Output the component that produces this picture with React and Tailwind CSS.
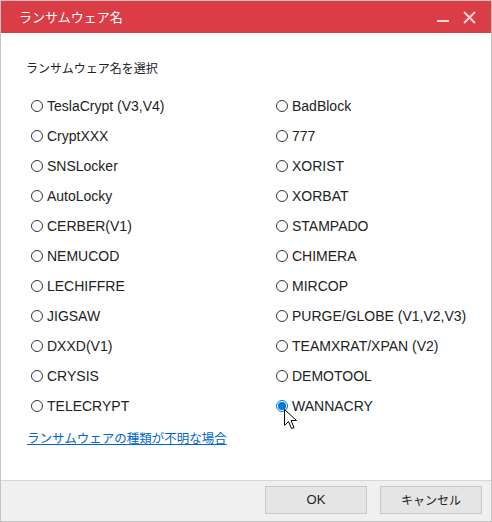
import { useState } from "react";

//ransomware names, two columns
const leftNames = [
  "TeslaCrypt (V3,V4)",
  "CryptXXX",
  "SNSLocker",
  "AutoLocky",
  "CERBER(V1)",
  "NEMUCOD",
  "LECHIFFRE",
  "JIGSAW",
  "DXXD(V1)",
  "CRYSIS",
  "TELECRYPT",
];
const rightNames = [
  "BadBlock",
  "777",
  "XORIST",
  "XORBAT",
  "STAMPADO",
  "CHIMERA",
  "MIRCOP",
  "PURGE/GLOBE (V1,V2,V3)",
  "TEAMXRAT/XPAN (V2)",
  "DEMOTOOL",
  "WANNACRY",
];

const font = { fontFamily: '"Liberation Sans", "Noto Sans CJK JP", sans-serif' };
const jp = { fontFamily: '"Noto Sans CJK JP", sans-serif' };

function Radio({ label, checked, onSelect }) {
  return (
    <button
      onClick={onSelect}
      className="flex items-center h-[30px] gap-[4px] text-[14px] text-[#222] text-left"
    >
      {checked ? (
        <span className="w-[12px] h-[12px] rounded-full border border-[#0078d7] flex items-center justify-center">
          <span className="w-[8px] h-[8px] rounded-full bg-[#0078d7]" />
        </span>
      ) : (
        <span className="w-[12px] h-[12px] rounded-full border border-[#333]" />
      )}
      <span>{label}</span>
    </button>
  );
}

export default function App() {
  const [selected, setSelected] = useState("WANNACRY");

  return (
    <div
      style={font}
      className="relative w-[492px] h-[522px] border border-[#c4c4c4] bg-white flex flex-col"
    >
      {/* title bar */}
      <div className="h-[32px] bg-[#db3d47] flex items-center justify-between pl-[18px] pr-[15px]">
        <span className="text-white text-[13px]" style={jp}>
          ランサムウェア名
        </span>
        <div className="flex items-center gap-[13px]">
          <svg width="13" height="13" viewBox="0 0 13 13">
            <rect x="0" y="9" width="12" height="2" fill="#fbd6d8" />
          </svg>
          <svg width="13" height="13" viewBox="0 0 13 13">
            <path d="M1 1 L12 12 M12 1 L1 12" stroke="#fbd6d8" strokeWidth="2" />
          </svg>
        </div>
      </div>

      {/* body */}
      <div className="flex-1 pl-[25px] pt-[26px]">
        <div className="text-[12px] leading-[18px] text-[#222]" style={jp}>
          ランサムウェア名を選択
        </div>
        <div className="mt-[14px] pl-[5px] grid grid-cols-[245px_1fr]">
          <div className="flex flex-col">
            {leftNames.map((n) => (
              <Radio key={n} label={n} checked={selected === n} onSelect={() => setSelected(n)} />
            ))}
          </div>
          <div className="flex flex-col">
            {rightNames.map((n) => (
              <Radio key={n} label={n} checked={selected === n} onSelect={() => setSelected(n)} />
            ))}
          </div>
        </div>
        <a
          href="#"
          className="block mt-[8px] ml-[1px] text-[12.5px] leading-[18px] text-[#0066cc] underline"
          style={jp}
        >
          ランサムウェアの種類が不明な場合
        </a>
      </div>

      {/* footer */}
      <div className="h-[41px] bg-[#f0f0f0] border-t border-[#d6d6d6] flex items-start justify-end gap-[13px] pt-[5px] pr-[9px]">
        <button className="w-[102px] h-[28px] bg-[#e5e5e5] border border-[#c8c8c8] text-[13px] text-[#222]">
          OK
        </button>
        <button
          className="w-[102px] h-[28px] bg-[#e5e5e5] border border-[#c8c8c8] text-[12px] text-[#222]"
          style={jp}
        >
          キャンセル
        </button>
      </div>

      {/* mouse cursor */}
      <svg className="absolute left-[283px] top-[408px]" width="14" height="22" viewBox="0 0 14 22">
        <path
          d="M0.5 0.5 L0.5 16.5 L4.5 12.5 L7.5 19.5 L10 18.5 L7 11.5 L12.5 11.5 Z"
          fill="#fff"
          stroke="#000"
          strokeWidth="1"
        />
      </svg>
    </div>
  );
}
